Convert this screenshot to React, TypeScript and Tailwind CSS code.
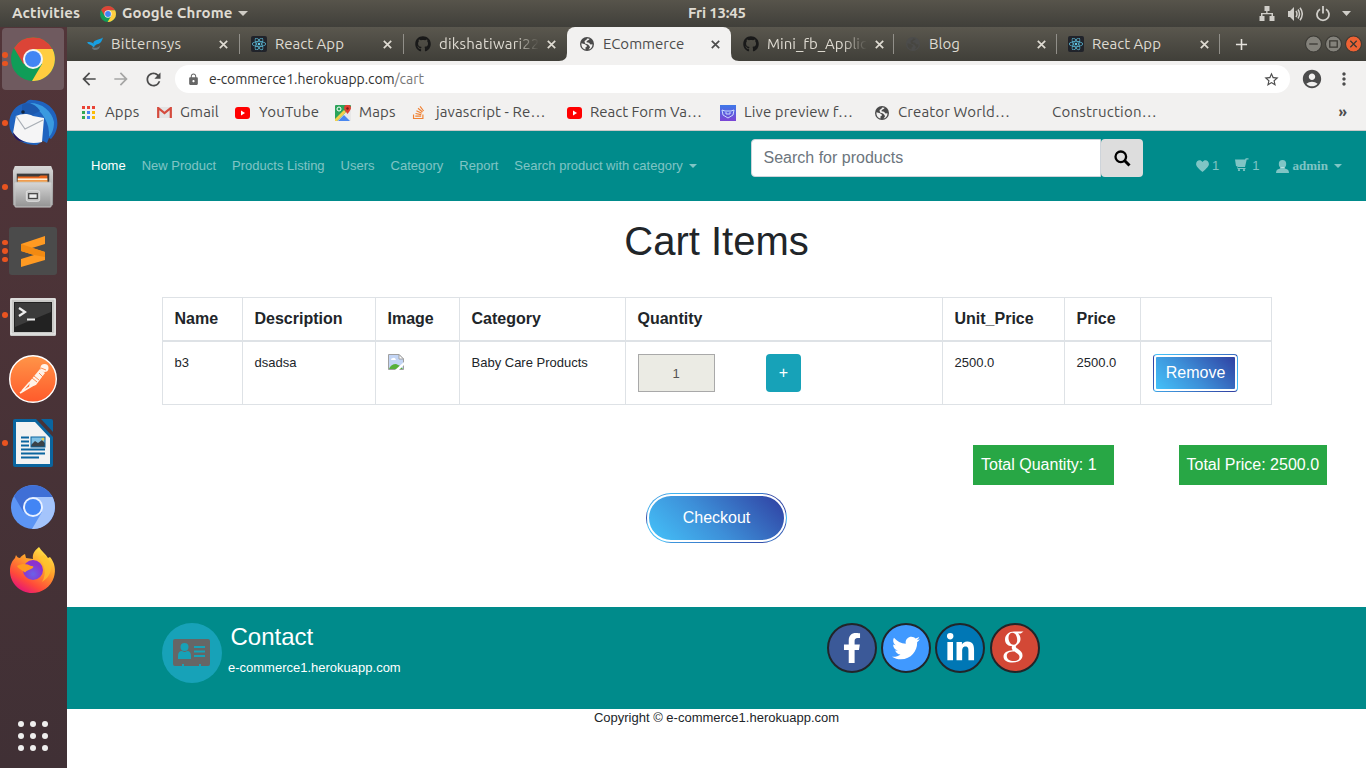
import type { ReactNode } from "react";
import {
  MdAccountCircle, MdAdd, MdArrowBack, MdArrowForward, MdLock,
  MdMoreVert, MdRefresh, MdStarBorder,
} from "react-icons/md";
import { FaFacebookF, FaGithub, FaReact, FaStackOverflow, FaTwitter, FaLinkedinIn } from "react-icons/fa";

const GRADIENT =
  "border border-transparent bg-[linear-gradient(45deg,#45c5fb_0%,#3d8fd8_45%,#2f3c9f_100%)] shadow-[inset_0_0_0_2px_#fff] text-white";

function ChromeIcon({ size, light = false }: { size: number; light?: boolean }) {
  const c = light
    ? { r: "#3f6fd6", g: "#5c95f5", y: "#a4c4fb" }
    : { r: "#dc4437", g: "#109d58", y: "#ffcd40" };
  return (
    <svg width={size} height={size} viewBox="0 0 44 44">
      <circle cx="22" cy="22" r="22" fill={c.g} />
      <path d="M3 11 A22 22 0 0 1 41.5 12 L22 12 L12.5 27 Z" fill={c.r} />
      <path d="M22 12 L41.5 12 A22 22 0 0 1 21 44 L31 27 Z" fill={c.y} />
      <circle cx="22" cy="22" r="10" fill={light ? "#e9f1ff" : "#f4f4f4"} />
      <circle cx="22" cy="22" r="8" fill="#4285f4" />
    </svg>
  );
}

function GlobeIcon({ color = "#4a4a4a", land = "#f2f1f0" }: { color?: string; land?: string }) {
  return (
    <svg width="14" height="14" viewBox="0 0 14 14">
      <circle cx="7" cy="7" r="7" fill={color} />
      <path d="M1.500 6.200 5 7.200 7 8.800 6.500 10 5.500 10.200 5.500 12.500C3 12 1 9.500 1.500 6.200ZM7 1.500 9.500 1.800C9.500 3 8 3.200 6.800 4L6.500 5.200 9 5.800 10.500 7.500 12.500 7.200C12.500 10 11 12 8.500 12.500L10 10.500 9.500 9 8 7.500 5 6.500 4.500 4 6.500 2.800Z" fill={land} />
    </svg>
  );
}

function BirdMailIcon() {
  return (
    <svg width="50" height="48" viewBox="0 0 50 48">
      <path d="M2 30C-1 18 6 6 17 4c3-3 5-4 7-3 10 0 20 5 24 15 3 9 1 18-5 24l-2-1-2 5-4-2-6 4C16 46 6 41 2 30Z" fill="#1f63bf" />
      <path d="M22 4c12 0 22 8 24 19 0 7-2 12-5 15 1-14-6-25-19-34Z" fill="#3a9ae0" />
      <path d="M14 6c6-4 14-1 18 6l-8 4-10-1Z" fill="#1c58ae" />
      <path d="M5 34 8 17c5-2 11-3 17 0l11 2-2 24C21 46 11 42 5 34Z" fill="#f5f5f6" />
      <path d="m8 17 9 13 18-9" fill="none" stroke="#a7adb5" strokeWidth="1.2" />
      <path d="M5 33c3 5 8 9 13 10-8 0-13-4-13-10Z" fill="#27165c" />
      <circle cx="15" cy="13" r="1.8" fill="#10243f" />
    </svg>
  );
}

function FilesIcon() {
  return (
    <svg width="42" height="44" viewBox="0 0 44 46">
      <defs>
        <linearGradient id="cab" x1="0" y1="0" x2="0" y2="1"><stop offset="0" stopColor="#d7d7d7" /><stop offset="1" stopColor="#939393" /></linearGradient>
      </defs>
      <path d="M3 1h38l2 5v36H1V6Z" fill="url(#cab)" />
      <rect x="5" y="9" width="34" height="10" fill="#3b3b3b" />
      <path d="M6 12h22l2-1h7v8H6Z" fill="#e8641b" />
      <path d="M6 14h31v2H6Z" fill="#fff2d8" />
      <path d="M6 16h31v3H6Z" fill="#f0a04a" />
      <rect x="3" y="18" width="38" height="26" rx="1" fill="url(#cab)" stroke="#c9c9c9" />
      <rect x="15" y="27" width="14" height="11" rx="2" fill="#c3c3c3" stroke="#eee" strokeWidth=".8" />
      <rect x="17.500" y="30" width="9" height="5" fill="#eee" stroke="#444" strokeWidth="1.300" />
    </svg>
  );
}

function SublimeIcon() {
  return (
    <svg width="48" height="48" viewBox="0 0 48 48">
      <rect width="48" height="48" rx="3" fill="#4b4b4b" />
      <path d="M12 17 36 9v8l-13 4 13 4v8L12 40v-8l13-4-13-4Z" fill="#ff9a22" />
      <path d="m12 17 24 8v5l-11-2-13-4Z" fill="#f28a12" />
    </svg>
  );
}

function TerminalIcon() {
  return (
    <svg width="46" height="38" viewBox="0 0 46 38" className="mt-[3px]">
      <rect width="46" height="38" rx="1.500" fill="#c9c9c7" />
      <rect x="1" y="1" width="44" height="35" fill="none" stroke="#efefef" />
      <rect x="4" y="4" width="38" height="30" fill="#222" />
      <path d="M5 5h36v9L5 29Z" fill="#3c3c3c" />
      <path d="m9 10 6 4-6 4M17 21.500h8" fill="none" stroke="#eee" strokeWidth="2.200" />
    </svg>
  );
}

function PostmanIcon() {
  return (
    <svg width="48" height="48" viewBox="0 0 48 48">
      <defs><linearGradient id="pm" x1="0" y1="0" x2="0" y2="1"><stop offset="0" stopColor="#ff9548" /><stop offset="1" stopColor="#ff5a2b" /></linearGradient></defs>
      <circle cx="24" cy="24" r="23.300" fill="url(#pm)" stroke="#fff" strokeWidth="1.400" />
      <circle cx="35.500" cy="13" r="4" fill="#fff3e8" />
      <path d="m31 14 5 4-9 12-7 2 1-6Z" fill="#fff3e8" />
      <path d="m21 27-8 9M26 29l-10 6-5 3" stroke="#fff3e8" strokeWidth="1.800" />
      <path d="m25 21 5 4m-7-2 5 4m2-9 4 4M32 13l5 2" stroke="#ff8040" strokeWidth=".9" />
    </svg>
  );
}

function WriterIcon() {
  return (
    <svg width="40" height="48" viewBox="0 0 40 48">
      <path d="M2 0h21l17 18v28q0 2-2 2H2q-2 0-2-2V2q0-2 2-2Z" fill="#0a659f" />
      <path d="M28 0h10q2 0 2 2v11Z" fill="#0a659f" />
      <path d="M3 3h19l15 16v26H3Z" fill="#f3f3f3" />
      <path d="M8 18.500h8M8 22.500h8M8 26.500h8M8 30.500h24M8 34.500h24M8 38.500h18" stroke="#0a659f" strokeWidth="1.800" />
      <rect x="18" y="18" width="14" height="10" fill="#7fc0e4" />
      <path d="m18 26 4-4 3 2 4-3 3 3v4H18Z" fill="#3a4248" />
      <circle cx="30" cy="20" r="1.500" fill="#e8cf4d" />
      <rect x="18" y="18" width="14" height="10" fill="none" stroke="#0a659f" />
    </svg>
  );
}

function FirefoxIcon() {
  return (
    <svg width="46" height="46" viewBox="0 0 46 46" className="-mt-0.5">
      <defs>
        <linearGradient id="fx" x1=".85" y1="0" x2=".25" y2="1"><stop offset="0" stopColor="#fff44f" /><stop offset=".4" stopColor="#ffa02b" /><stop offset=".75" stopColor="#ff4a3a" /><stop offset="1" stopColor="#e3107e" /></linearGradient>
        <radialGradient id="fp" cx=".5" cy=".7"><stop offset="0" stopColor="#6a62e8" /><stop offset="1" stopColor="#8c32cf" /></radialGradient>
      </defs>
      <path d="M29 0c2 4 7 7 9 11l2-1c5 6 6 13 4 20-3 10-12 16-22 16C10 46 0 36 0 24c0-6 2-10 5-13l1-3c1 2 2 3 4 3 1-2 3-3 5-4l1 4 7 1c-1-5 2-9 6-12Z" fill="url(#fx)" />
      <circle cx="23" cy="23" r="10" fill="url(#fp)" />
      <path d="M7 19c6-3 10-2 14 0 3 0 3 1 1 2.500-3 1.500-5 1.500-7 4-2-2-6-3-8-6.500Z" fill="#ff9a1f" />
      <path d="M28 11c7 5 9 16 4 24 12-7 11-20 2-27Z" fill="#ffc62b" opacity=".7" />
    </svg>
  );
}

function DockItem({ dots = 0, active = false, children }: { dots?: number; active?: boolean; children: ReactNode }) {
  return (
    <div className="flex h-16 w-full items-center">
      <div className="flex w-2 shrink-0 flex-col items-center gap-[3px] pl-0.5">
        {Array.from({ length: dots }, (_, i) => (
          <span key={i} className="relative z-10 h-[5.500px] w-[5.500px] rounded-full bg-[#e95420]" />
        ))}
      </div>
      <div className={active ? "-ml-1.5 flex h-[62px] w-[62px] items-center justify-center rounded-[4px] bg-[#6f5a5f]" : "-ml-1.5 flex h-[62px] w-[62px] items-center justify-center"}>
        {children}
      </div>
    </div>
  );
}

function Dock() {
  return (
    <aside className="flex w-[67px] shrink-0 flex-col bg-linear-to-b from-[#523539] to-[#403035]">
      <DockItem dots={2} active><ChromeIcon size={44} /></DockItem>
      <DockItem dots={1}><BirdMailIcon /></DockItem>
      <DockItem dots={1}><FilesIcon /></DockItem>
      <DockItem dots={3}><SublimeIcon /></DockItem>
      <DockItem dots={1}><TerminalIcon /></DockItem>
      <DockItem><PostmanIcon /></DockItem>
      <DockItem dots={1}><WriterIcon /></DockItem>
      <DockItem><ChromeIcon size={44} light /></DockItem>
      <DockItem><FirefoxIcon /></DockItem>
      <div className="mt-auto mb-[17px] ml-[18px] grid w-[30px] grid-cols-[6px_6px_6px] gap-[6px]">
        {Array.from({ length: 9 }, (_, i) => (
          <span key={i} className="h-[6px] w-[6px] rounded-full bg-[#efefee]" />
        ))}
      </div>
    </aside>
  );
}

function TopBar() {
  return (
    <header className="flex h-[27px] shrink-0 items-center bg-linear-to-b from-[#57544b] to-[#403f3a] text-[15px] font-bold text-[#dfdbd2]">
      <div className="w-[88px] pl-3 tracking-[0.150px]">Activities</div>
      <div className="flex w-[160px] items-center pl-3">
        <ChromeIcon size={16} />
        <span className="ml-1.5 w-[111px] whitespace-nowrap tracking-[0.120px]">Google Chrome</span>
        <svg width="10" height="5" className="ml-[5px] shrink-0"><path d="M0 0h10L5 5Z" fill="#cfccc5" /></svg>
      </div>
      <div className="ml-[440px] w-[62px] whitespace-nowrap tracking-[-0.200px]">Fri 13:45</div>
      <div className="ml-auto flex items-center pr-[15px] text-[#d0cec9]">
        <svg width="16" height="16" viewBox="0 0 16 16" fill="currentColor"><path d="M5.500 0h5v5h-2v2H14v3h1.500v5h-5v-5h2V8.200h-9V10h2v5H.5v-5H2V7h5.200V5H5.500Z" /></svg>
        <svg width="16" height="14" viewBox="0 0 16 14" className="ml-3" fill="currentColor"><path d="M1 4h2l4-4v14l-4-4H1Z" /><path d="M9 4q2 3 0 6M11 2.500q3 4.500 0 9M13 .8q4.500 6 0 12.400" fill="none" stroke="currentColor" strokeWidth="1.500" /></svg>
        <svg width="14" height="16" viewBox="0 0 14 16" className="ml-[13px]"><path d="M4 3.200a6 6 0 1 0 6 0M7 0v7.500" fill="none" stroke="currentColor" strokeWidth="1.800" /></svg>
        <svg width="9" height="5" className="ml-3"><path d="M0 0h9L4.500 5Z" fill="currentColor" /></svg>
      </div>
    </header>
  );
}

const reactTile = (
  <span className="flex h-4 w-4 items-center justify-center rounded-[2px] bg-[#20232a] text-[#61c9e8]"><FaReact size={14} /></span>
);

function BitternLogo() {
  return (
    <svg width="17" height="14" viewBox="0 0 17 14">
      <path d="M0 5.500C4 4 6 6 7.500 7.500 8.500 9 8 10 7 10.500 5 8 2 8 0 5.500Z" fill="#1aa0e0" />
      <path d="M6.500 6C8 2 12 3 17 0c-1 3-2 6-5 7-2 .5-3 1-4 2.500Z" fill="#169fe2" />
      <path d="M8 11q5 0 6-3 0 5-6 5.500-3-1-2.500-3Z" fill="#66747b" />
    </svg>
  );
}

function Tab({ icon, title, width, active = false, fade = false, line = false, spacing = "" }: {
  icon: ReactNode; title: string; width: string; active?: boolean; fade?: boolean; line?: boolean; spacing?: string;
}) {
  return (
    <div className={`flex h-full shrink-0 items-center ${width} ${active
      ? "relative rounded-t-[8px] bg-[#f2f1f0] text-[#4c4c4c]"
      : "text-[#dfdbd2]"}`}>
      {active && (
        <>
          <svg width="8" height="8" className="absolute bottom-0 -left-2"><path d="M8 0v8H0Q8 8 8 0Z" fill="#f2f1f0" /></svg>
          <svg width="8" height="8" className="absolute -right-2 bottom-0"><path d="M0 0v8h8Q0 8 0 0Z" fill="#f2f1f0" /></svg>
        </>
      )}
      <span className={line ? "h-5 w-px bg-[#918f89]" : "h-5 w-px"} />
      <span className="ml-[11px] flex h-4 w-4 shrink-0 items-center justify-center">{icon}</span>
      <span className={`ml-2 w-[100px] overflow-hidden text-[15px] whitespace-nowrap ${spacing} ${fade ? "mask-r-from-75% mask-r-to-100%" : ""}`}>{title}</span>
      <svg width="9" height="9" viewBox="0 0 9 9" className="ml-2 shrink-0"><path d="m.8.8 7.400 7.400M8.200.8.8 8.200" stroke="currentColor" strokeWidth="1.700" /></svg>
    </div>
  );
}

function TabStrip() {
  return (
    <div className="flex h-[34px] shrink-0 items-center bg-linear-to-b from-[#5a574e] to-[#403f39] pl-2">
      <Tab width="w-[164px]" icon={<BitternLogo />} title="Bitternsys" spacing="tracking-[0.250px]" />
      <Tab width="w-[164px]" icon={reactTile} title="React App" line />
      <Tab width="w-[164px]" icon={<FaGithub size={16} color="#191919" />} title="dikshatiwari22" line fade spacing="tracking-[0.200px]" />
      <Tab width="w-[164px]" icon={<GlobeIcon />} title="ECommerce" active />
      <Tab width="w-[162px]" icon={<FaGithub size={16} color="#191919" />} title="Mini_fb_Applic" fade />
      <Tab width="w-[163px]" icon={<GlobeIcon color="#4c4c4b" land="#474641" />} title="Blog" line />
      <Tab width="w-[163px]" icon={reactTile} title="React App" line />
      <span className="h-5 w-px bg-[#918f89]" />
      <MdAdd size={19} className="ml-3 text-[#e6e3dd]" />
      <div className="mr-1 ml-auto flex gap-[3px]">
        {["M4 8h8", "M4.500 5h7v6h-7Z", "M5 5l6 6M11 5l-6 6"].map((d, i) => (
          <svg key={d} width="17" height="18" viewBox="0 0 16 16">
            <circle cx="8" cy="8" r="7.500" fill={i === 2 ? "#ee6234" : "#84827b"} stroke="#3a3934" />
            <path d={d} fill="none" stroke="#3a3833" strokeWidth="1.200" />
          </svg>
        ))}
      </div>
    </div>
  );
}

function YouTubeIcon() {
  return <svg width="15" height="12" viewBox="0 0 15 12"><rect width="15" height="12" rx="3" fill="#f00" /><path d="m6 3.500 4 2.500-4 2.500Z" fill="#fff" /></svg>;
}

function Bookmark({ icon, label, box, gap }: { icon: ReactNode; label: string; box: string; gap: string }) {
  return (
    <div className={`flex shrink-0 items-center whitespace-nowrap ${box}`}>
      <span className={`flex shrink-0 items-center ${gap}`}>{icon}</span>
      {label}
    </div>
  );
}

const appColors = ["#ea4335", "#ea4335", "#ea4335", "#34a853", "#4285f4", "#fbbc05", "#34a853", "#4285f4", "#fbbc05"];

function BrowserToolbar() {
  return (
    <div className="h-[70px] shrink-0 border-b border-[#c9c9c8] bg-[#f2f1f0] text-[#4c4c4c]">
      <div className="flex h-9 items-center pl-3">
        <MdArrowBack size={20} />
        <MdArrowForward size={20} className="ml-3 text-[#a5a5a4]" />
        <MdRefresh size={21} className="ml-3" />
        <div className="ml-[11px] flex h-7 w-[1115px] items-center rounded-full bg-white pl-3 text-[14px]">
          <MdLock size={13} className="text-[#666]" />
          <span className="ml-[9px] tracking-[-0.060px] text-[#333]">e-commerce1.herokuapp.com<span className="text-[#777]">/cart</span></span>
          <MdStarBorder size={17} className="mr-[10px] ml-auto" />
        </div>
        <MdAccountCircle size={22} className="ml-[11px]" />
        <MdMoreVert size={20} className="ml-[11px]" />
      </div>
      <div className="flex h-[31px] items-center pl-[15px] text-[15px] tracking-[0.120px]">
        <Bookmark box="w-[75px]" gap="w-[23px]" label="Apps" icon={
          <span className="grid grid-cols-3 gap-[2px]">{appColors.map((c, i) => <svg key={i} width="3" height="3"><rect width="3" height="3" fill={c} /></svg>)}</span>
        } />
        <Bookmark box="w-[78px]" gap="w-[23px]" label="Gmail" icon={
          <svg width="15" height="11" viewBox="0 0 15 11"><rect width="15" height="11" fill="#e4e4e4" /><path d="M1.200 11V1l6.300 5 6.300-5v10" fill="none" stroke="#d54b3d" strokeWidth="2.200" /></svg>
        } />
        <Bookmark box="w-[100px] tracking-[0.200px]" gap="w-[24px]" label="YouTube" icon={<YouTubeIcon />} />
        <Bookmark box="w-[78px]" gap="w-[24px]" label="Maps" icon={
          <svg width="16" height="16" viewBox="0 0 16 16"><rect width="16" height="16" rx="1" fill="#2ca35a" /><path d="m2 16 14-14v14Z" fill="#e8e8e8" /><path d="m3 16 6-6 6 6Z" fill="#4a87ef" /><path d="m0 14 9-9 2 2-9 9H0Z" fill="#f5d04b" /><circle cx="4" cy="4" r="2" fill="none" stroke="#fff" /><path d="M12.500 9Q9 4.500 9 3.200a3.500 3.500 0 0 1 7 0Q16 4.500 12.500 9Z" fill="#df3f32" /><circle cx="12.500" cy="3.500" r="1.200" fill="#7d1d17" /></svg>
        } />
        <Bookmark box="w-[154px]" gap="w-[23px]" label="javascript - Re…" icon={<FaStackOverflow size={15} color="#f08132" className="-ml-0.5" />} />
        <Bookmark box="w-[153px] tracking-[-0.020px]" gap="w-[23px]" label="React Form Va…" icon={<YouTubeIcon />} />
        <Bookmark box="w-[155px]" gap="w-[24px]" label="Live preview f…" icon={
          <svg width="16" height="16" viewBox="0 0 16 16"><defs><linearGradient id="lp" x1="0" y1="0" x2="0" y2="1"><stop stopColor="#3f78e8" /><stop offset="1" stopColor="#7b45d5" /></linearGradient></defs><rect width="16" height="16" fill="url(#lp)" /><path d="m2 5 3 1h6l3-1-1 5-5 3-5-3Zm3 3h2v2m4-2H9v2" fill="none" stroke="#cbd9ff" /></svg>
        } />
        <Bookmark box="w-[177px]" gap="w-[23px]" label="Creator World…" icon={<GlobeIcon />} />
        <span className="whitespace-nowrap tracking-[0.220px]">Construction…</span>
        <span className="mr-[19px] ml-auto font-bold">»</span>
      </div>
    </div>
  );
}

function Caret() {
  return <span className="inline-block border-x-4 border-t-4 border-x-transparent border-t-current" />;
}

function Navbar() {
  const links = ["New Product", "Products Listing", "Users", "Category", "Report"];
  return (
    <nav className="flex h-[70px] shrink-0 items-center bg-[#008b8b] pl-6 text-[13px] text-white/50">
      <div className="flex w-[660px] gap-4 whitespace-nowrap">
        <span className="text-white">Home</span>
        {links.map((l) => <span key={l}>{l}</span>)}
        <span className="flex items-center gap-1.5">Search product with category <Caret /></span>
      </div>
      <div className="mt-2 flex h-[38px] w-[392px] self-start text-[16px]">
        <div className="flex w-[350px] items-center rounded-l-[4px] border border-[#ced4da] bg-white pl-[11.500px] text-[#6c757d]">Search for products</div>
        <div className="flex w-[42px] items-center justify-center rounded-[4px] bg-[#ddd]">
          <svg width="17" height="17" viewBox="0 0 17 17"><circle cx="6.800" cy="6.800" r="5.300" fill="none" stroke="#000" strokeWidth="2.300" /><path d="m10.500 10.500 5 5" stroke="#000" strokeWidth="3" /></svg>
        </div>
      </div>
      <div className="ml-[53px] flex items-center">
        <svg width="13" height="12" viewBox="0 0 13 12"><path d="M6.500 12Q1 7.500.2 5C-.6 1 4-1.500 6.500 2 9-1.500 13.600 1 12.800 5 12 7.500 6.500 12 6.500 12Z" fill="currentColor" /></svg>
        <span className="ml-[3px]">1</span>
        <svg width="14" height="13" viewBox="0 0 14 13" className="-mt-1 ml-4"><path d="M0 1.500h10L10.800.2H13.500V1.500h-1.800L10 9H3v1h7.500v1H2.500V8.500L1 8Z" fill="currentColor" /><circle cx="4" cy="12" r="1.100" fill="currentColor" /><circle cx="9" cy="12" r="1.100" fill="currentColor" /></svg>
        <span className="ml-[3px]">1</span>
        <svg width="13" height="13" viewBox="0 0 13 13" className="ml-[17px]"><ellipse cx="6.500" cy="4" rx="3.700" ry="4" fill="currentColor" /><path d="M4.200 7h4.600V8.500l2.700.9q1.500.7 1.500 3.600H0q0-2.900 1.500-3.600l2.700-.9Z" fill="currentColor" /></svg>
        <span className="mr-1.5 ml-[3px] font-['Liberation_Serif',serif] font-bold">admin</span>
        <Caret />
      </div>
    </nav>
  );
}

function BrokenImage() {
  return (
    <svg width="16" height="16" viewBox="0 0 16 16">
      <path d="M.5.5H11L15.500 5v10.500H.5Z" fill="#c3d5f5" stroke="#a0a0a0" />
      <path d="M11 .5V5h4.500Z" fill="#fff" stroke="#a0a0a0" />
      <path d="M3 6q0-2 2-2 2-1 3 2Z" fill="#fff" />
      <path d="M1 15q2-5 7-5 4 1 7 5Z" fill="#58b03b" />
      <path d="m7 16 9-8v3l-5 5Z" fill="#fff" />
    </svg>
  );
}

const COLS = "grid grid-cols-[80px_133px_84px_166px_317px_122px_76px_131px]";

function CartTable() {
  const headers = ["Name", "Description", "Image", "Category", "Quantity", "Unit_Price", "Price", ""];
  const cells: ReactNode[] = [
    "b3", "dsadsa", <BrokenImage />, "Baby Care Products",
    <div className="flex">
      <div className="flex h-[38px] w-[77px] items-center justify-center border border-[#a9a9a9] bg-[#ebebe4] pt-0.5 pr-px text-[#545454]">1</div>
      <div className="ml-[51px] flex h-[38px] w-[35px] items-center justify-center rounded-[4px] bg-[#17a2b8] text-[16px] text-white">+</div>
    </div>,
    "2500.0", "2500.0",
    <div className={`${GRADIENT} flex h-[38px] w-[85px] items-center justify-center rounded-[4px] text-[16px]`}>Remove</div>,
  ];
  return (
    <div className="ml-[95px] w-[1110px] border-r border-b border-[#dee2e6]">
      <div className={`${COLS} h-[45px] border-t border-b-2 border-[#dee2e6] text-[16px] font-bold`}>
        {headers.map((h, i) => <div key={i} className="border-l border-[#dee2e6] pt-[9px] pl-[11.500px] leading-6">{h}</div>)}
      </div>
      <div className={`${COLS} h-[62px] text-[13px]`}>
        {cells.map((c, i) => <div key={i} className={`border-l border-[#dee2e6] pt-3 leading-[18px] ${typeof c === "string" ? "pl-[11.500px]" : "pl-3"}`}>{c}</div>)}
      </div>
    </div>
  );
}

function Footer() {
  const circle = "flex h-[50px] w-[50px] items-center justify-center rounded-full border-2 border-[#212529] text-white";
  return (
    <footer>
      <div className="flex h-[102px] bg-[#008b8b] pt-4 pl-[95px]">
        <div className="flex h-[60px] w-[60px] items-center justify-center rounded-full bg-[#17a2b8] pr-0.5">
          <svg width="37" height="28" viewBox="0 0 37 28">
            <path d="M2 0h33q2 0 2 2v23q0 2-2 2h-7v-2h-2v2H11v-2H9v2H2q-2 0-2-2V2q0-2 2-2Z" fill="#666" />
            <circle cx="11.500" cy="8" r="4" fill="#17a2b8" />
            <path d="M5 20v-3q0-5 4-5 3 2 5 0 4 0 4 5v3ZM21 7h11v2H21Zm0 4.500h11v2H21ZM21 16h11v2H21Z" fill="#17a2b8" />
          </svg>
        </div>
        <div className="ml-[5.500px] w-[599.500px] text-white">
          <div className="pl-[3px] text-[24px] leading-[28px]">Contact</div>
          <div className="mt-2 pl-[0.500px] text-[13px] leading-[18px]">e-commerce1.herokuapp.com</div>
        </div>
        <div className="flex gap-1">
          <div className={`${circle} bg-[#3b5998]`}><FaFacebookF size={30} className="-mt-px -ml-px" /></div>
          <div className={`${circle} bg-[#4099ff]`}><FaTwitter size={28} /></div>
          <div className={`${circle} bg-[#0077b5]`}><FaLinkedinIn size={31} /></div>
          <div className={`${circle} ml-px bg-[#d34836]`}>
            <svg width="22" height="32" viewBox="0 0 22 32" fill="currentColor" fillRule="evenodd" className="-mt-0.5 -ml-0.5">
              <path d="M20.500.5H11C6 .5 2 4 2 8.500 2 12.500 5 15.200 9.200 15.200 8.300 16.600 8.700 18 9.800 19.200 4 19.500 .5 21.800.5 25.500.5 29.500 4.500 31.500 9.500 31.500 15.500 31.500 19.500 28.500 19.500 24.500 19.500 21.500 18 20 15 18 12.500 16.300 12 15.500 14 14 16 12.500 17.500 10.800 17.500 8 17.500 5.500 16.500 3.600 15 2.400H17.800ZM9.500 1.800C12.500 1.800 14.200 5.500 14.200 9 14.200 12 12.800 13.800 10.500 13.800 7.500 13.800 5.500 10.200 5.500 6.800 5.500 3.800 7 1.800 9.500 1.800ZM11.500 20.500C15 23 16.500 24 16.500 26 16.500 28.500 14.500 30 11 30 6.500 30 3.800 28 3.800 25 3.800 21.500 7 20.400 11.500 20.500Z" />
            </svg>
          </div>
        </div>
      </div>
      <div className="text-center text-[13px] leading-[18px]">Copyright © e-commerce1.herokuapp.com</div>
    </footer>
  );
}

export default function App() {
  return (
    <div className="flex h-[768px] w-[1366px] flex-col overflow-hidden bg-white font-['Ubuntu','Noto_Sans',sans-serif]">
      <TopBar />
      <div className="flex min-h-0 flex-1">
        <Dock />
        <div className="flex w-[1299px] flex-col">
          <TabStrip />
          <BrowserToolbar />
          <div className="flex-1 bg-white font-['Liberation_Sans',Arial,sans-serif] text-[#212529]">
            <Navbar />
            <h1 className="mt-4 mb-8 text-center text-[40px] leading-[48px]">Cart Items</h1>
            <CartTable />
            <div className="mt-10 flex justify-end gap-[65px] pr-[39px] text-[16px] text-white">
              <div className="flex h-10 w-[141px] items-center bg-[#28a745] pl-2">Total Quantity: 1</div>
              <div className="flex h-10 w-[148px] items-center bg-[#28a745] pl-[7.500px] whitespace-nowrap">Total Price: 2500.0</div>
            </div>
            <div className={`${GRADIENT} mx-auto mt-2 mb-16 flex h-[50px] w-[141px] items-center justify-center rounded-full text-[16px]`}>Checkout</div>
            <Footer />
          </div>
        </div>
      </div>
    </div>
  );
}
